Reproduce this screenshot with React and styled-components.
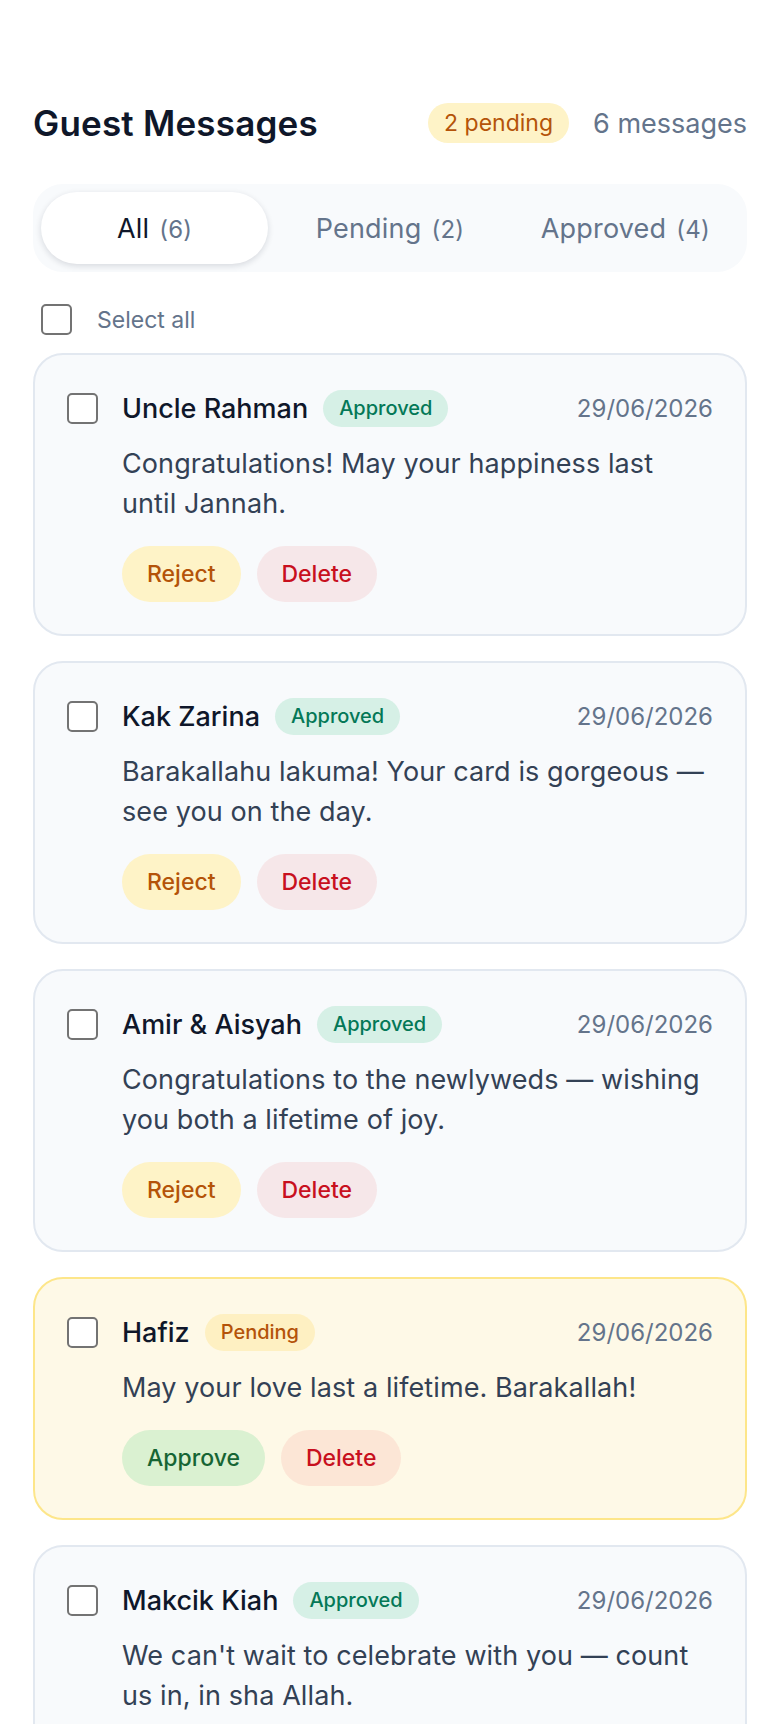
import React, { useState } from "react";
import styled, { createGlobalStyle, css } from "styled-components";

const GlobalStyle = createGlobalStyle`
  body {
    margin: 0;
    background: #ffffff;
    font-family: "Inter", "Noto Sans", sans-serif;
    color: #0f172a;
  }
`;

const messages = [
  {
    id: 1,
    name: "Uncle Rahman",
    status: "approved",
    date: "29/06/2026",
    text: "Congratulations! May your happiness last until Jannah.",
  },
  {
    id: 2,
    name: "Kak Zarina",
    status: "approved",
    date: "29/06/2026",
    text: "Barakallahu lakuma! Your card is gorgeous — see you on the day.",
  },
  {
    id: 3,
    name: "Amir & Aisyah",
    status: "approved",
    date: "29/06/2026",
    text: "Congratulations to the newlyweds — wishing you both a lifetime of joy.",
  },
  {
    id: 4,
    name: "Hafiz",
    status: "pending",
    date: "29/06/2026",
    text: "May your love last a lifetime. Barakallah!",
  },
  {
    id: 5,
    name: "Makcik Kiah",
    status: "approved",
    date: "29/06/2026",
    text: "We can't wait to celebrate with you — count us in, in sha Allah.",
  },
  {
    id: 6,
    name: "Pak Long Idris",
    status: "pending",
    date: "28/06/2026",
    text: "Selamat pengantin baru! Semoga berbahagia hingga ke anak cucu.",
  },
];

const Page = styled.div`
  padding: 102px 33px 40px;
`;

const Header = styled.div`
  display: flex;
  align-items: center;
  gap: 24px;
  height: 42px;
`;

const Title = styled.h1`
  flex: 1;
  margin: 0;
  font-size: 35px;
  font-weight: 600;
  letter-spacing: 0.2px;
  color: #0f172a;
`;

const CountPill = styled.span`
  display: inline-flex;
  align-items: center;
  height: 40px;
  padding: 0 16px;
  border-radius: 20px;
  background: #fef3c7;
  color: #b45309;
  font-size: 23px;
`;

const Total = styled.span`
  font-size: 27px;
  color: #64748b;
`;

const Tabs = styled.div`
  display: grid;
  grid-template-columns: repeat(3, 1fr);
  gap: 8px;
  margin-top: 40px;
  padding: 8px;
  background: #f8fafc;
  border-radius: 30px;
`;

const Tab = styled.button`
  height: 72px;
  border: none;
  border-radius: 36px;
  background: transparent;
  font-family: inherit;
  font-size: 27px;
  letter-spacing: 0.2px;
  color: #64748b;
  cursor: pointer;

  ${(p) =>
    p.$active &&
    css`
      background: #ffffff;
      color: #0f172a;
      box-shadow: 0 2px 6px rgba(15, 23, 42, 0.14);
    `}
`;

const TabCount = styled.span`
  margin-left: 10px;
  font-size: 24px;
  color: #64748b;
`;

const SelectRow = styled.label`
  display: flex;
  align-items: center;
  gap: 25px;
  margin: 32px 0 18px 8px;
  font-size: 23px;
  color: #64748b;
`;

const Box = styled.input.attrs({ type: "checkbox" })`
  appearance: none;
  flex: none;
  width: 31px;
  height: 31px;
  margin: 0;
  border: 2px solid #737373;
  border-radius: 5px;
  background: #ffffff;
`;

const List = styled.div`
  display: flex;
  flex-direction: column;
  gap: 25px;
`;

const Card = styled.div`
  padding: 33px 32px 32px;
  border: 2px solid ${(p) => (p.$pending ? "#fde68a" : "#e2e8f0")};
  border-radius: 30px;
  background: ${(p) => (p.$pending ? "#fef9e7" : "#f8fafc")};
`;

const CardTop = styled.div`
  display: flex;
  align-items: center;
  gap: 24px;
  height: 40px;
`;

const NameLine = styled.div`
  flex: 1;
  display: flex;
  align-items: center;
  gap: 15px;
`;

const Name = styled.span`
  font-size: 27px;
  font-weight: 500;
  color: #0f172a;
`;

const Badge = styled.span`
  display: inline-flex;
  align-items: center;
  height: 37px;
  padding: 0 16px;
  border-radius: 19px;
  font-size: 20px;
  font-weight: 500;
  background: ${(p) => (p.$pending ? "#fef0c2" : "#d6f0e6")};
  color: ${(p) => (p.$pending ? "#b45309" : "#047857")};
`;

const DateText = styled.span`
  font-size: 24px;
  color: #64748b;
`;

const Body = styled.div`
  padding-left: 55px;
`;

const Text = styled.p`
  margin: 16px 0 0;
  font-size: 27px;
  letter-spacing: 0.1px;
  line-height: 40px;
  color: #334155;
`;

const Actions = styled.div`
  display: flex;
  gap: 16px;
  margin-top: 22px;
`;

const tones = {
  reject: { bg: "#fef3c7", fg: "#b45309" },
  approve: { bg: "rgba(34, 197, 94, 0.16)", fg: "#166534" },
  delete: { bg: "rgba(239, 68, 68, 0.1)", fg: "#c8101e" },
};

const Action = styled.button`
  height: 56px;
  padding: 0 25px;
  border: none;
  border-radius: 28px;
  font-family: inherit;
  font-size: 23px;
  font-weight: 500;
  background: ${(p) => tones[p.$tone].bg};
  color: ${(p) => tones[p.$tone].fg};
  cursor: pointer;
`;

function MessageCard({ msg }) {
  const pending = msg.status === "pending";
  return (
    <Card $pending={pending}>
      <CardTop>
        <Box />
        <NameLine>
          <Name>{msg.name}</Name>
          <Badge $pending={pending}>{pending ? "Pending" : "Approved"}</Badge>
        </NameLine>
        <DateText>{msg.date}</DateText>
      </CardTop>
      <Body>
        <Text>{msg.text}</Text>
        <Actions>
          {pending ? (
            <Action $tone="approve">Approve</Action>
          ) : (
            <Action $tone="reject">Reject</Action>
          )}
          <Action $tone="delete">Delete</Action>
        </Actions>
      </Body>
    </Card>
  );
}

export default function App() {
  const [tab, setTab] = useState("all");
  const pendingCount = messages.filter((m) => m.status === "pending").length;
  const approvedCount = messages.length - pendingCount;

  const tabs = [
    { key: "all", label: "All", count: messages.length },
    { key: "pending", label: "Pending", count: pendingCount },
    { key: "approved", label: "Approved", count: approvedCount },
  ];

  return (
    <Page>
      <GlobalStyle />
      <Header>
        <Title>Guest Messages</Title>
        <CountPill>{pendingCount} pending</CountPill>
        <Total>{messages.length} messages</Total>
      </Header>

      <Tabs>
        {tabs.map((t) => (
          <Tab key={t.key} $active={tab === t.key} onClick={() => setTab(t.key)}>
            {t.label}
            <TabCount>({t.count})</TabCount>
          </Tab>
        ))}
      </Tabs>

      <SelectRow>
        <Box />
        Select all
      </SelectRow>

      <List>
        {messages.map((m) => (
          <MessageCard key={m.id} msg={m} />
        ))}
      </List>
    </Page>
  );
}
